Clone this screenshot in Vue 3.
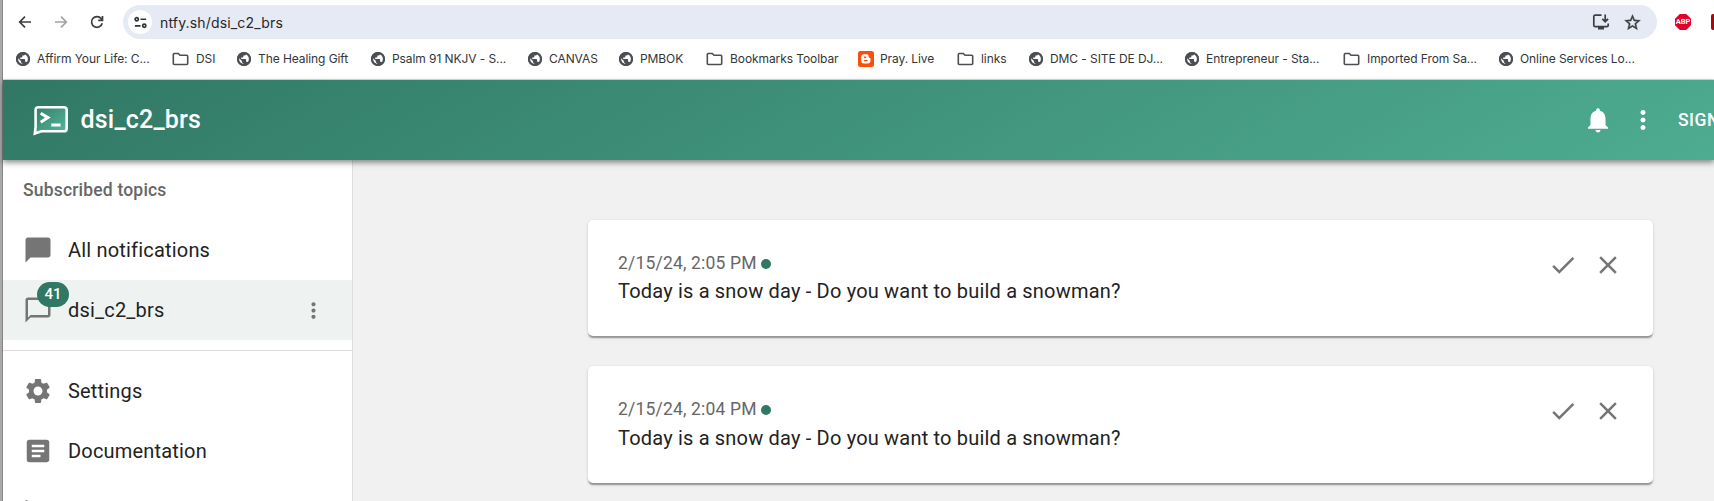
<script setup>
const bookmarks = [
  { icon: 'globe', label: 'Affirm Your Life: C...', w: 156 },
  { icon: 'folder', label: 'DSI', w: 65 },
  { icon: 'globe', label: 'The Healing Gift', w: 134 },
  { icon: 'globe', label: 'Psalm 91 NKJV - S...', w: 157 },
  { icon: 'globe', label: 'CANVAS', w: 91 },
  { icon: 'globe', label: 'PMBOK', w: 87 },
  { icon: 'folder', label: 'Bookmarks Toolbar', w: 152 },
  { icon: 'blogger', label: 'Pray. Live', w: 99 },
  { icon: 'folder', label: 'links', w: 72 },
  { icon: 'globe', label: 'DMC - SITE DE DJ...', w: 156 },
  { icon: 'globe', label: 'Entrepreneur - Sta...', w: 158 },
  { icon: 'folder', label: 'Imported From Sa...', w: 156 },
  { icon: 'globe', label: 'Online Services Lo...', w: 140 },
]
const messages = [
  { time: '2/15/24, 2:05 PM', text: 'Today is a snow day - Do you want to build a snowman?' },
  { time: '2/15/24, 2:04 PM', text: 'Today is a snow day - Do you want to build a snowman?' },
]
const dots = 'M12 8c1.1 0 2-.9 2-2s-.9-2-2-2-2 .9-2 2 .9 2 2 2zm0 2c-1.1 0-2 .9-2 2s.9 2 2 2 2-.9 2-2-.9-2-2-2zm0 6c-1.1 0-2 .9-2 2s.9 2 2 2 2-.9 2-2-.9-2-2-2z'
</script>

<template>
  <div class="screen">
    <div class="edge"></div>
    <div class="window">
      <div class="toolbar">
        <svg class="nav back" viewBox="0 0 16 16"><path d="M14 8H3M8 2.700 2.700 8 8 13.300" /></svg>
        <svg class="nav forward" viewBox="0 0 16 16"><path d="M2 8h11M8 2.700 13.300 8 8 13.300" /></svg>
        <svg class="nav reload" viewBox="0 0 16 16"><path d="M13.200 9.200A5.400 5.400 0 1 1 12.200 4.600L13.400 6M13.500 2v4.300H9.200" /></svg>
        <div class="omnibox">
          <span class="site">
            <svg viewBox="0 0 16 16"><circle cx="4" cy="4.500" r="1.700" /><path d="M8 4.500h6M2 11.500h6" /><circle cx="12" cy="11.500" r="1.700" /></svg>
          </span>
          <span class="url">ntfy.sh/dsi_c2_brs</span>
          <svg class="install" viewBox="0 0 18 18"><path d="M9.500 2.200H3.200Q1.800 2.200 1.800 3.600v8.600q0 1.400 1.400 1.400h11.600q1.400 0 1.400-1.400V10.500M13.200 1.500v7M10.300 5.800l2.900 2.900 2.900-2.900" /><path class="solid" d="M6 14h6v2.500H6z" /></svg>
          <svg class="star" viewBox="0 0 24 24"><path d="m22 9.240-7.190-.62L12 2 9.190 8.630 2 9.240l5.460 4.730L5.820 21 12 17.270 18.180 21l-1.630-7.030L22 9.240zM12 15.400l-3.760 2.270 1-4.280-3.320-2.880 4.380-.38L12 6.100l1.710 4.040 4.380.38-3.320 2.880 1 4.280L12 15.400z" /></svg>
        </div>
        <div class="abp"><span>ABP</span></div>
        <div class="ext"></div>
      </div>

      <div class="bookmarks">
        <div v-for="b in bookmarks" :key="b.label" class="bookmark" :style="{ width: b.w + 'px' }">
          <svg v-if="b.icon === 'globe'" class="globe" viewBox="2 2 20 20"><path d="M12 2C6.480 2 2 6.480 2 12s4.480 10 10 10 10-4.480 10-10S17.520 2 12 2zm-1 17.930c-3.950-.49-7-3.850-7-7.930 0-.62.080-1.210.21-1.790L9 15v1c0 1.100.9 2 2 2v1.930zm6.900-2.540c-.26-.81-1-1.390-1.900-1.390h-1v-3c0-.55-.45-1-1-1H8v-2h2c.55 0 1-.45 1-1V7h2c1.100 0 2-.9 2-2v-.41c2.930 1.190 5 4.060 5 7.410 0 2.080-.8 3.970-2.100 5.390z" /><circle cx="12" cy="12" r="8.500" /></svg>
          <svg v-else-if="b.icon === 'folder'" class="folder" viewBox="0 0 17 14"><path d="M2.300 1.500h4L8 3.300h6.700q1 0 1 1v7.200q0 1-1 1H2.300q-1 0-1-1v-9q0-1 1-1z" /></svg>
          <svg v-else class="blogger" viewBox="0 0 16 16"><rect width="16" height="16" rx="2.500" /><path d="M5.700 3.300h2.700q2.400 0 2.400 2.400v.5q0 .6.800.6.900.1.900.9v1.700q0 3-3 3H5.900Q3.200 12.400 3.200 9.700V5.800q0-2.500 2.500-2.500z" /><path class="slot" d="M6 6.200h2.200M6 9.600h3.700" /></svg>
          <span>{{ b.label }}</span>
        </div>
      </div>

      <header class="appbar">
        <svg class="logo" viewBox="0 0 36 32">
          <defs><linearGradient id="screenFill" x1="0" y1="0" x2="1" y2="1"><stop offset="0" stop-color="#347f69" /><stop offset="1" stop-color="#55b99b" /></linearGradient></defs>
          <path class="bubble" d="M5.500 2.200h25.300q2.900 0 2.900 2.900v18.300q0 2.900-2.900 2.900H8.300L1.800 28.500 2.600 22V5.100q0-2.900 2.900-2.900z" fill="url(#screenFill)" />
          <path class="prompt" d="m7.700 8.300 7.200 4.300-7.200 4.700" /><path class="prompt" d="M18.300 20h9.300" />
        </svg>
        <h1>dsi_c2_brs</h1>
        <svg class="mi bell" viewBox="0 0 24 24"><path d="M12 22c1.100 0 2-.9 2-2h-4c0 1.100.89 2 2 2zm6-6v-5c0-3.070-1.640-5.640-4.500-6.320V4c0-.83-.67-1.500-1.500-1.500s-1.500.67-1.500 1.500v.68C7.630 5.360 6 7.920 6 11v5l-2 2v1h16v-1l-2-2z" /></svg>
        <svg class="mi menu" viewBox="0 0 24 24"><path :d="dots" /></svg>
        <span class="signin">SIGN</span>
      </header>

      <div class="body">
        <nav class="sidebar">
          <div class="subheader">Subscribed topics</div>
          <div class="row">
            <svg class="mi" viewBox="0 0 24 24"><path d="M20 2H4c-1.100 0-2 .9-2 2v18l4-4h14c1.100 0 2-.9 2-2V4c0-1.100-.9-2-2-2z" /></svg>
            <span>All notifications</span>
          </div>
          <div class="row selected">
            <div class="badged">
              <svg class="mi" viewBox="0 0 24 24"><path d="M20 2H4c-1.100 0-2 .9-2 2v18l4-4h14c1.100 0 2-.9 2-2V4c0-1.100-.9-2-2-2zm0 14H6l-2 2V4h16v12z" /></svg>
              <b>41</b>
            </div>
            <span>dsi_c2_brs</span>
            <svg class="more" viewBox="0 0 24 24"><path :d="dots" /></svg>
          </div>
          <hr>
          <div class="row">
            <svg class="mi" viewBox="0 0 24 24"><path d="M19.140 12.940c.04-.3.060-.61.060-.94 0-.32-.02-.64-.07-.94l2.030-1.580c.18-.14.23-.41.12-.61l-1.920-3.320c-.12-.22-.37-.29-.59-.22l-2.390.96c-.5-.38-1.030-.7-1.620-.94l-.36-2.540c-.04-.24-.24-.41-.48-.41h-3.840c-.24 0-.43.17-.47.41l-.36 2.540c-.59.24-1.130.57-1.620.94l-2.390-.96c-.22-.08-.47 0-.59.22L2.740 8.870c-.12.21-.08.47.12.61l2.030 1.580c-.05.3-.09.63-.09.94s.02.64.07.94l-2.030 1.580c-.18.14-.23.41-.12.61l1.920 3.320c.12.22.37.29.59.22l2.390-.96c.5.38 1.030.7 1.620.94l.36 2.540c.05.24.24.41.48.41h3.840c.24 0 .44-.17.47-.41l.36-2.540c.59-.24 1.130-.56 1.620-.94l2.390.96c.22.08.47 0 .59-.22l1.920-3.320c.12-.22.07-.47-.12-.61l-2.010-1.580zM12 15.600c-1.980 0-3.600-1.620-3.600-3.600s1.620-3.600 3.600-3.600 3.600 1.620 3.600 3.600-1.620 3.600-3.600 3.600z" /></svg>
            <span>Settings</span>
          </div>
          <div class="row">
            <svg class="mi" viewBox="0 0 24 24"><path d="M19 3H5c-1.100 0-2 .9-2 2v14c0 1.100.9 2 2 2h14c1.100 0 2-.9 2-2V5c0-1.100-.9-2-2-2zm-5 14H7v-2h7v2zm3-4H7v-2h10v2zm0-4H7V7h10v2z" /></svg>
            <span>Documentation</span>
          </div>
          <div class="row">
            <svg class="mi" viewBox="0 0 24 24"><path d="M2.010 21 23 12 2.010 3 2 10l15 2-15 2z" /></svg>
          </div>
        </nav>

        <main class="feed">
          <article v-for="m in messages" :key="m.time" class="card">
            <div class="content">
              <div class="time">{{ m.time }}<i></i></div>
              <div class="message">{{ m.text }}</div>
            </div>
            <svg class="mi" viewBox="0 0 24 24"><path d="M9 16.170 4.830 12l-1.420 1.410L9 19 21 7l-1.410-1.410z" /></svg>
            <svg class="mi" viewBox="0 0 24 24"><path d="M19 6.410 17.590 5 12 10.590 6.410 5 5 6.410 10.590 12 5 17.590 6.410 19 12 13.410 17.590 19 19 17.590 13.410 12z" /></svg>
          </article>
        </main>
      </div>
    </div>
  </div>
</template>

<style>
body { margin: 0; overflow: hidden; }
</style>

<style scoped>
.screen { display: flex; width: 1714px; height: 501px; overflow: hidden; background: #fff; font-family: Roboto, "Liberation Sans", sans-serif; }
.screen * { box-sizing: border-box; }
svg { display: block; flex: none; }
.edge { width: 3px; flex: none; background: linear-gradient(90deg, #aaa 0 2px, #858585 2px); }
.window { width: 1711px; flex: none; display: flex; flex-direction: column; }

.toolbar { height: 44px; display: flex; align-items: center; padding-left: 14px; overflow: hidden; font-family: Inter, sans-serif; }
.toolbar > * { flex: none; }
.nav { width: 16px; height: 16px; fill: none; stroke: #3c3e40; stroke-width: 1.7; }
.forward { margin-left: 20px; stroke: #a3a4a5; }
.reload { margin-left: 20px; }
.omnibox { width: 1534px; height: 34px; margin-left: 18px; border-radius: 17px; background: #e6eaf5; display: flex; align-items: center; padding: 0 15px 0 5px; }
.site { width: 24px; height: 24px; flex: none; border-radius: 50%; background: #fff; display: grid; place-items: center; }
.site svg { width: 15px; height: 15px; fill: none; stroke: #303235; stroke-width: 1.8; }
.url { flex: 1; margin-left: 8px; font-size: 14px; letter-spacing: .16px; color: #26282b; }
.install { width: 18px; height: 18px; fill: none; stroke: #3c3e42; stroke-width: 1.7; }
.install .solid { fill: #3c3e42; stroke: none; }
.star { width: 19px; height: 19px; margin-left: 13px; fill: #3c3e42; stroke: #3c3e42; stroke-width: .5; }
.abp { width: 16px; height: 16px; margin-left: 18px; background: #e4002b; clip-path: polygon(30% 0, 70% 0, 100% 30%, 100% 70%, 70% 100%, 30% 100%, 0 70%, 0 30%); display: grid; place-items: center; }
.abp span { font: 700 7.5px/16px Roboto, sans-serif; color: #fff; }
.ext { width: 16px; height: 16px; margin-left: 20px; border-radius: 2px; background: #9b0d10; }

.bookmarks { height: 36px; display: flex; padding: 0 0 6px 13px; border-bottom: 1px solid #dcdedd; font-family: Inter, sans-serif; font-size: 12px; letter-spacing: -.08px; color: #333538; }
.bookmark { display: flex; align-items: center; flex: none; white-space: nowrap; }
.globe { width: 14px; height: 14px; margin-right: 7px; fill: #4b4e53; }
.globe circle { fill: none; stroke: #4b4e53; stroke-width: 3; }
.folder { width: 17px; height: 14px; margin-right: 7px; fill: none; stroke: #4b4e53; stroke-width: 1.6; }
.blogger { width: 16px; height: 16px; margin-right: 6px; fill: #fff; }
.blogger rect { fill: #fc4f08; }
.blogger .slot { stroke: #fc4f08; stroke-width: 1.4; }

.appbar { position: relative; z-index: 1; height: 80px; flex: none; display: flex; align-items: center; color: #fff; white-space: nowrap; background: linear-gradient(150deg, #317864 0%, #4eac90 100%); box-shadow: 0 2px 5px rgba(0,0,0,.35), 0 4px 6px rgba(0,0,0,.14); }
.logo { width: 36px; height: 32px; margin: 2px 0 0 30px; }
.bubble { stroke: #fff; stroke-width: 2.6; }
.prompt { fill: none; stroke: #fff; stroke-width: 3; }
.appbar h1 { flex: 1; margin: 0 0 0 11.5px; font-size: 25px; line-height: 40px; font-weight: 500; letter-spacing: .0075em; }
.mi { width: 30px; height: 30px; fill: #757575; }
.appbar .mi { fill: #fff; }
.menu { margin-left: 15px; }
.signin { width: 36px; margin-left: 20px; overflow: hidden; font-size: 17.5px; font-weight: 500; letter-spacing: .02857em; }

.body { flex: 1; display: flex; min-height: 0; }
.sidebar { width: 350px; flex: none; border-right: 1px solid #dedede; background: #fff; overflow: hidden; }
.subheader { height: 60px; padding-left: 20px; line-height: 60px; font-size: 17.5px; font-weight: 500; letter-spacing: .01071em; color: #666; }
.row { height: 60px; display: flex; align-items: center; padding: 0 26px 0 20px; font-size: 20px; letter-spacing: .00938em; color: #222; }
.row > span { flex: 1; margin-left: 15px; }
.selected { background: #eef3f1; }
.badged { position: relative; }
.badged b { position: absolute; left: 14px; top: -13px; width: 32px; height: 25px; border-radius: 12.5px; background: #317864; color: #fff; font-size: 15px; font-weight: 500; line-height: 25px; letter-spacing: 0; text-align: center; }
.more { width: 25px; height: 25px; fill: #757575; }
.sidebar hr { margin: 10px 0; border: 0; height: 1px; background: #dedede; }

.feed { flex: 1; background: #f1f1f1; padding: 60px 61px 0 235px; display: flex; flex-direction: column; gap: 29.95px; }
.card { height: 116.45px; flex: none; display: flex; padding: 30px 30px 0; border-radius: 5px; background: #fff; box-shadow: 0 2.500px 1.250px -1.250px rgba(0,0,0,.2), 0 1.250px 1.250px rgba(0,0,0,.14), 0 1.250px 3.750px rgba(0,0,0,.12); }
.content { flex: 1; padding-top: .6px; }
.time { display: flex; align-items: center; font-size: 17.5px; line-height: 25px; letter-spacing: .01071em; color: #666; }
.time i { width: 10px; height: 10px; margin: 1px 0 0 4px; border-radius: 50%; background: #317864; }
.message { margin-top: .6px; font-size: 20px; line-height: 30px; letter-spacing: .00938em; color: #222; }
.card .mi + .mi { margin-left: 15px; }
</style>
